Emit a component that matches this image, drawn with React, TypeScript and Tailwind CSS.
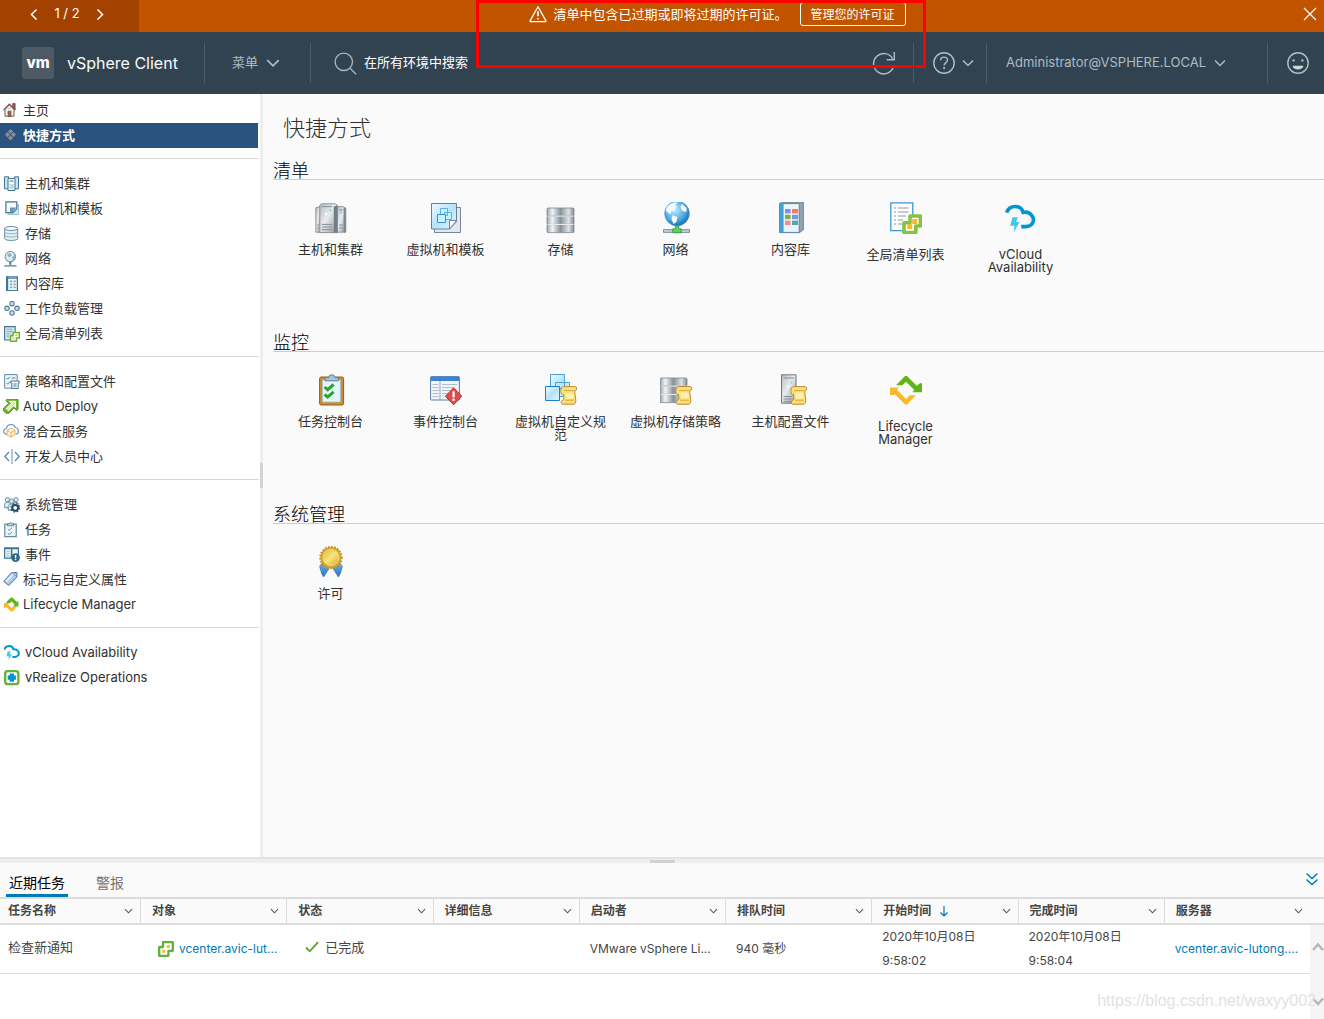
import React from "react";

type IconProps = { className?: string };

/* ---------- header glyphs ---------- */

function Chevron({ className, d = "M1 4.5 6 9.5l5-5" }: IconProps & { d?: string }) {
  return (
    <svg className={className} viewBox="0 0 12 14" fill="none" stroke="currentColor" strokeWidth="1.5" aria-hidden="true">
      <path d={d} />
    </svg>
  );
}

function WarningIcon() {
  return (
    <svg className="h-[18px] w-[18px] shrink-0" viewBox="0 0 18 18" fill="none" stroke="currentColor" strokeWidth="1.3" aria-hidden="true">
      <path d="M9 1.8 1.2 15.6c-.3.6 0 1 .6 1h14.4c.6 0 .9-.4.6-1z" strokeLinejoin="round" />
      <path d="M9 6.3v5" strokeWidth="1.6" />
      <circle cx="9" cy="13.7" r=".9" fill="currentColor" stroke="none" />
    </svg>
  );
}

function SearchIcon() {
  return (
    <svg className="h-6 w-6" viewBox="0 0 24 24" fill="none" stroke="#a9b5bd" strokeWidth="1.4" aria-hidden="true">
      <circle cx="9.8" cy="10.8" r="8.7" />
      <path d="m16.1 17.2 6 6" />
    </svg>
  );
}

function RefreshIcon() {
  return (
    <svg className="h-6 w-6" viewBox="0 0 24 24" fill="none" stroke="#b3bdc4" strokeWidth="1.4" aria-hidden="true">
      <path d="M21.3 16.3A10.2 10.2 0 1 1 20.6 7.6" />
      <path d="M22.3 1v7.7h-7.6" />
    </svg>
  );
}

function HelpIcon() {
  return (
    <svg className="h-6 w-6" viewBox="0 0 24 24" fill="none" stroke="#b3bdc4" strokeWidth="1.4" aria-hidden="true">
      <circle cx="12" cy="12" r="10.2" />
      <path d="M8.6 9.3c0-4.2 6.9-4.2 6.9-.3 0 2.6-3.4 2.6-3.4 5.4" />
      <circle cx="12.1" cy="17.1" r="1.1" fill="#b3bdc4" stroke="none" />
    </svg>
  );
}

function SmileIcon() {
  return (
    <svg className="h-6 w-6" viewBox="0 0 24 24" fill="none" stroke="#b3bdc4" strokeWidth="1.4" aria-hidden="true">
      <circle cx="12" cy="12" r="10.2" />
      <circle cx="7.6" cy="9.4" r="1.2" fill="#b3bdc4" stroke="none" />
      <circle cx="16.4" cy="9.4" r="1.2" fill="#b3bdc4" stroke="none" />
      <path d="M6.6 14.8h10.8c-.4 5-10.4 5-10.8 0z" fill="#cfd6da" stroke="none" />
    </svg>
  );
}

/* ---------- 16px navigator icons ---------- */

function Small({ children }: { children: React.ReactNode }) {
  return (
    <svg className="h-4 w-4 shrink-0" viewBox="0 0 16 16" fill="none" aria-hidden="true">
      {children}
    </svg>
  );
}

const HomeIcon = () => (
  <Small>
    <path d="M9.6.4h2.6v6H9.6z" fill="#a85048" stroke="#7a3a34" strokeWidth=".6" />
    <path d="M2 6.4 6.300 1.800l4.700 4.600v6.800H2z" fill="#f3f0ec" stroke="#6e5a52" strokeWidth="1" />
    <path d="M.4 7.200 6.300 1l6.200 6.200" stroke="#6e5a52" strokeWidth="1.1" />
    <path d="M5 8.200h3v5H5z" fill="#b0655c" stroke="#6b3832" strokeWidth=".6" />
    <path d="M5.200 4.500h2.400v2H5.200z" fill="#c9d3da" />
  </Small>
);
const ShortcutsIcon = () => (
  <Small>
    <g fill="#8c8c8c">
      <path d="M7.5.9 10.100 3.500 7.500 6.100 4.900 3.500z" />
      <path d="M4.500 4.100 7.100 6.700 4.500 9.300 1.900 6.700z" />
      <path d="M10.500 4.100 13.100 6.700 10.500 9.300 7.900 6.700z" />
      <path d="M7.500 7.300 10.100 9.900 7.500 12.500 4.900 9.900z" />
    </g>
  </Small>
);
const HostsIcon = () => (
  <Small>
    <g stroke="#3f7792">
      <path d="M.5.8h4v12H.5zM10.5.8h4v12h-4z" fill="#cfe0e8" />
      <path d="M4 2.500h7v12H4z" fill="#f6fafc" />
      <path d="M5.500 5h4" />
    </g>
    <path d="M5.500 8h4.400v5.400H5.500z" fill="#c5d9e3" />
  </Small>
);
const VmsIcon = () => (
  <Small>
    <path d="M4 3.500h10.500v10H4z" fill="#d9e7ee" stroke="#9dbfce" />
    <path d="M1.900.8h10.900v7L9 11.600H1.900z" fill="#f4f9fb" stroke="#3f7792" strokeWidth="1.2" />
    <path d="M6 11.500V6.400h6.500L8.200 11.600z" fill="#3f7792" opacity=".75" />
  </Small>
);
const StorageIcon = () => (
  <Small>
    <path d="M.7 2.500v10c0 2.600 13 2.600 13 0v-10" fill="#e7f0f4" stroke="#5f8da3" />
    <ellipse cx="7.200" cy="2.500" rx="6.500" ry="2" fill="#f8fbfc" stroke="#5f8da3" />
    <path d="M.7 6c0 2.400 13 2.400 13 0M.7 9.200c0 2.400 13 2.400 13 0" stroke="#8fb0c0" />
  </Small>
);
const NetworkIcon = () => (
  <Small>
    <circle cx="6.300" cy="5.700" r="5.200" fill="#dfeaf0" stroke="#5f8da3" />
    <path d="M3 3.600 6 2l2 2.500-3 2zM8.200 6l2.300-1.600.3 2.700-2 1.800z" fill="#8eb1c2" />
    <path d="M2 8.500c3.500 4.500 10 1 8.300-5.500" stroke="#7da2b4" strokeWidth=".7" />
    <path d="M6.300 10.800v3" stroke="#3f7792" strokeWidth="2" />
    <path d="M.3 14.900h12.200" stroke="#3f7792" strokeWidth="1.2" />
  </Small>
);
const LibraryIcon = () => (
  <Small>
    <path d="M2.600.9h10.800v13.600H2.600z" fill="#f3f8fa" stroke="#3f7792" strokeWidth="1.200" />
    <path d="M2 .5h2.200v14.400H2z" fill="#3f7792" />
    <path d="M3 2.200h10.400" stroke="#3f7792" />
    <g fill="#7fa6b8">
      <path d="M6 4.500h2.200v1.800H6zM9.500 4.500h2.200v1.800H9.500zM6 7.500h2.200v1.800H6zM9.500 7.500h2.200v1.800H9.500zM6 10.500h2.200v1.800H6zM9.500 10.500h2.200v1.800H9.500z" />
    </g>
  </Small>
);
const WorkloadIcon = () => (
  <Small>
    <g fill="#cfe0e8" stroke="#4d7f97" strokeWidth="1.100">
      <circle cx="8" cy="2.700" r="2.200" />
      <circle cx="8" cy="11.900" r="2.200" />
      <circle cx="3" cy="7.300" r="2.200" />
      <circle cx="13" cy="7.300" r="2.200" />
    </g>
  </Small>
);

function VcGlyph() {
  return (
    <>
      <path d="M5 1.200h9.800v8.600h-4.400v5H1.200V6H5z" fill="#fff" stroke="#62b234" strokeWidth="2.300" strokeLinejoin="round" />
      <path d="M8.800 4h3v3h-3zM4.200 8.800h3v3h-3z" fill="#f9b934" />
    </>
  );
}

const GlobalListIcon = () => (
  <Small>
    <path d="M.600.600h10.600v13.400H.600z" fill="#d5e5ec" stroke="#3f7792" strokeWidth="1.100" />
    <path d="M2.500 3.300h6M2.500 5.600h6M2.500 7.900h4M2.500 10.200h3" stroke="#8aa9b8" />
    <g transform="translate(5.800 5.800) scale(.64)">
      <VcGlyph />
    </g>
  </Small>
);
const PolicyIcon = () => (
  <Small>
    <path d="M.600.600h12.600v13.600H.600z" fill="#eef5f8" stroke="#5f8da3" />
    <path d="m2.500 4 1.200 1.200L5.800 2.800M2.500 9l1.200 1.200 2.100-2.400M7.500 4h4" stroke="#4d7f97" />
    <path d="M6.800 7h8.400v2h-1v5.400H7.800V9h-1z" fill="#fff" stroke="#3f7792" />
    <path d="M9.400 10h3.200M9.400 12h3.200" stroke="#3f7792" />
  </Small>
);
const AutoDeployIcon = () => (
  <Small>
    <path d="M4.200 0h10c.5 0 .8.300.8.800v9.600l-1.200 1.100-3-2.600-4.600 5.300H3L.600 12V9.200L5.700 4.400 3 1.600z" fill="#74b52b" stroke="#4f9416" strokeWidth="1" strokeLinejoin="round" />
    <path d="M6.200 2.300h6.300v6.200l-2-1.900-5 5.200-2.300-2.200L8.300 4.400z" fill="#d8efb0" stroke="#fff" strokeWidth=".9" />
  </Small>
);
const HybridCloudIcon = () => (
  <Small>
    <path d="M4 10.400C-.400 10-.200 4.600 3.400 4.500c.5-4.800 7.600-5.400 8.800-1 4.200.4 4.200 6.400.4 6.900" stroke="#6d9dbb" strokeWidth="1.200" />
    <path d="m8 4.300 4 2v4.600l-4 2.200-4-2.200V6.300zM4 6.300l4 2.200 4-2.200M8 8.500v4.600" fill="#fdf3df" stroke="#e8b455" strokeWidth="1" />
  </Small>
);
const DeveloperIcon = () => (
  <Small>
    <path d="M5 3 .800 7.500 5 12M11 3l4.200 4.500L11 12" stroke="#4d86a5" strokeWidth="1.200" />
    <path d="M8 0v15" stroke="#7fa6b8" strokeWidth="1.200" />
  </Small>
);
const AdminIcon = () => (
  <Small>
    <g fill="#e3edf2" stroke="#5f8da3" strokeWidth="1">
      <circle cx="3.400" cy="2.700" r="2.100" />
      <circle cx="12" cy="2.700" r="2.100" />
      <path d="M.600 10.800V7.400c0-2.800 5.400-2.800 5.400 0v3.400zM9.400 8.800V7.400c0-2.800 5.200-2.800 5.200 0v1.400z" />
      <circle cx="7.700" cy="4.100" r="2.100" />
      <path d="M4.200 13.200V9.600c0-3.400 7-3.400 7 0v3.600z" />
    </g>
    <circle cx="11.200" cy="10.800" r="2.900" fill="#fff" stroke="#234d63" strokeWidth="2" />
    <circle cx="11.200" cy="10.800" r="4.300" stroke="#234d63" strokeWidth="1.200" strokeDasharray="1.700 1.700" />
  </Small>
);
const TasksIcon = () => (
  <Small>
    <path d="M.800 2.200h11.400v12.400H.800z" fill="#f1f7f9" stroke="#5f8da3" strokeWidth="1.200" />
    <path d="M3.500 1.800h1.800L6.500.300l1.200 1.500h1.800v2h-6z" fill="#c5d9e3" stroke="#3f7792" strokeWidth=".8" />
    <path d="m3.800 7.200 1.300 1.200 3-2.800M3.800 11.400l1.300 1.200 3-2.800" stroke="#5f8da3" />
  </Small>
);
const EventsIcon = () => (
  <Small>
    <path d="M.600 1.200h13.800v10H.600z" fill="#eef5f8" stroke="#3f7792" strokeWidth="1.200" />
    <path d="M0 1.400h15M7.600 1.200v10" stroke="#3f7792" strokeWidth="1.600" />
    <path d="M2.300 4.600h3.400M2.300 6.800h3.400M2.300 9h3.400" stroke="#9dbfce" />
    <circle cx="11.600" cy="10.600" r="4.300" fill="#2f6785" />
    <path d="M11.600 8v3M11.600 11.800v1.400" stroke="#fff" strokeWidth="1.400" />
  </Small>
);
const TagIcon = () => (
  <Small>
    <path d="M8.300.8 13.800.500l.200 4.600-8.200 8.400L.700 9.400z" fill="#a9cbe8" stroke="#4b79a8" strokeLinejoin="round" />
    <path d="m8.500 2.500 3-.2-7.400 8-1.700-1.200z" fill="#deedf9" />
    <circle cx="12" cy="2.600" r="1.100" fill="#fff" stroke="#4b79a8" strokeWidth=".6" />
  </Small>
);

function LifecycleGlyph() {
  return (
    <>
      <path d="M6 11.300 14.600 2.400c.9-.9 1.900-.9 2.800 0l9.400 9.300L30 9.200h2v9h-9.600l1.900-2.200-8.300-8.200-3.700 3.500z" fill="#60b515" />
      <path d="M26 21.200 17.400 30c-.9.9-1.900.9-2.800 0l-9.500-9.500L0 21.600V13.400h9L7 15.800l9 9.100 3.800-3.700z" fill="#fdb827" />
    </>
  );
}
const LifecycleSmall = () => (
  <Small>
    <path d="M3.400 5 7.300 1c.8-.8 1.800-.8 2.600 0l3.900 3.900L15.400 4v5.400H10l1.600-1.900-3-3L7 6H4z" fill="#60b515" />
    <path d="M13.300 10.200 9.900 13.900c-.8.8-1.800.8-2.600 0L3.400 10 1 11.200V5.900h5.600L5.100 7.500l3.500 3.400 1.300-1.300h2.700z" fill="#fdb827" />
  </Small>
);
function VCloudGlyph() {
  return (
    <>
      <path d="M2.600 9.600C5.500 1.400 17 1.500 19.200 9.400c7.200-1.600 12.500 5.600 9.200 11-1.500 2.400-3.800 3.200-6.600 3.200h-4.600" stroke="#0095d3" strokeWidth="3.600" />
      <path d="M8.400 14.200h5.400l-1.700 4.800h3.400L9.700 29.600l.8-6.800H6.200z" fill="#3ccbe8" />
    </>
  );
}
const VCloudSmall = () => (
  <Small>
    <path d="M.3 4.700c1.500-4.800 8.200-5 9.200-.4 3.800-.5 6.700 3.200 4.700 6-.8 1.200-2 1.700-3.500 1.700H8.400" stroke="#0095d3" strokeWidth="2" />
    <path d="M3.600 6.500h3l-1 2.800H8L4.500 15l.4-3.800H2.500z" fill="#3ccbe8" />
  </Small>
);
const VRealizeIcon = () => (
  <Small>
    <rect x="1.200" y="1" width="13.200" height="13.200" rx="2.800" fill="#fff" stroke="#62b234" strokeWidth="2.300" />
    <path d="M5.600 3.500h4.400v1.900h1.900v4.400H10v1.900H5.600V9.800H3.700V5.400h1.900z" fill="#0095d3" />
  </Small>
);

/* ---------- 32px shortcut icons ---------- */

function SharedGradients() {
  return (
    <svg className="absolute h-0 w-0" aria-hidden="true">
      <defs>
        <linearGradient id="metal" x1="0" x2="1">
          <stop offset="0" stopColor="#9aa4ab" />
          <stop offset=".2" stopColor="#f2f4f5" />
          <stop offset=".5" stopColor="#86929a" />
          <stop offset=".8" stopColor="#dfe3e5" />
          <stop offset="1" stopColor="#7f8b93" />
        </linearGradient>
        <linearGradient id="tower" x1="0" x2="1" y1="0" y2="1">
          <stop offset="0" stopColor="#b4babe" />
          <stop offset=".45" stopColor="#e9ebec" />
          <stop offset="1" stopColor="#8e979d" />
        </linearGradient>
        <linearGradient id="sky" x1="0" x2="1" y1="0" y2="1">
          <stop offset="0" stopColor="#eefaff" />
          <stop offset=".5" stopColor="#b4e2f7" />
          <stop offset="1" stopColor="#e6f7fe" />
        </linearGradient>
        <radialGradient id="globe" cx=".4" cy=".35" r=".65">
          <stop offset="0" stopColor="#c8edff" />
          <stop offset=".6" stopColor="#55b2e8" />
          <stop offset="1" stopColor="#1d74b6" />
        </radialGradient>
        <linearGradient id="gold" x1="0" x2="1" y1="0" y2="1">
          <stop offset="0" stopColor="#dcb53a" />
          <stop offset=".5" stopColor="#f6e67c" />
          <stop offset="1" stopColor="#d6a82c" />
        </linearGradient>
        <linearGradient id="ribbon" x1="0" x2="0" y1="0" y2="1">
          <stop offset="0" stopColor="#6fb2ea" />
          <stop offset="1" stopColor="#2b6fb8" />
        </linearGradient>
      </defs>
    </svg>
  );
}

function Large({ children }: { children: React.ReactNode }) {
  return (
    <svg className="h-8 w-8" viewBox="0 0 32 32" fill="none" aria-hidden="true">
      {children}
    </svg>
  );
}

function Scroll() {
  return (
    <>
      <path d="M18.600 12.600h11.600c2.200 0 2 3.800-.2 4-.8 2 .8 7.200.8 10 0 2.600-1 3.600-2.600 3.600H18c-2.400 0-2.600-3.800 0-4 1.200-.4.8-3.400.4-5.800h-1c-2.600-.8-2-7.600 1.200-7.800z" fill="#fbdf7c" stroke="#b98a22" />
      <path d="M19 16.600h10M20 26.200h9" stroke="#dba93a" />
      <path d="M20.600 18.600h7.800l.6 6h-8z" fill="#fdefae" />
    </>
  );
}

function Disks() {
  return (
    <>
      <rect x="2" y="6" width="27" height="8" rx="1" fill="url(#metal)" stroke="#7d8990" strokeWidth=".8" />
      <rect x="2" y="14.300" width="27" height="8" rx="1" fill="url(#metal)" stroke="#7d8990" strokeWidth=".8" />
      <rect x="2" y="22.600" width="27" height="8" rx="1" fill="url(#metal)" stroke="#7d8990" strokeWidth=".8" />
      <path d="M3 14.100h25M3 22.400h25" stroke="#f4f6f7" />
    </>
  );
}

const HostsLarge = () => (
  <Large>
    <path d="M.800 5.800 6 4.600v25.600H.800z" fill="url(#tower)" stroke="#7b858c" strokeWidth=".8" />
    <path d="M22 4.600h6l2.800 1.400v24.200H22z" fill="url(#tower)" stroke="#7b858c" strokeWidth=".8" />
    <path d="m28.600 5.400 2.200.6v24.200h-2.200z" fill="#7d878d" />
    <path d="M4.800 3.200 7 1.800h13.400l1.800 1.400v27.400H4.800z" fill="url(#tower)" stroke="#737e85" strokeWidth=".8" />
    <path d="m18.800 4.400 3.400-1v27.200h-3.400z" fill="#727d84" />
    <path d="M6.600 4.600h10.600M6.600 22.400h10.600M6.600 25h10.600M6.600 27.600h10.600M24 8h4M24 23h4M24 26h4M1.800 23h2M1.800 26h2" stroke="#89939a" />
    <circle cx="15.500" cy="8.200" r="1" fill="#66d5f5" />
    <circle cx="26" cy="10.400" r="1" fill="#66d5f5" />
    <circle cx="11" cy="12" r="1.400" fill="#f4f5f6" />
  </Large>
);
const VmsLarge = () => (
  <Large>
    <path d="M4.500 5.500h26v25h-26z" fill="#e3e8ee" stroke="#74869c" />
    <path d="M1.500 1.500h25v18.200l-7 7.300h-18z" fill="url(#sky)" stroke="#66809c" />
    <path d="M26.500 18.500h-7V27z" fill="#fff" stroke="#74869c" />
    <g fill="#c5f2ff" stroke="#5ab0e4">
      <path d="M10.500 6.500h7v7h-7zM14.500 10.500h7v7h-7z" />
      <path d="M7.500 12.500h8v8h-8z" stroke="#3c8fcc" />
    </g>
  </Large>
);
const StorageLarge = () => (
  <Large>
    <Disks />
  </Large>
);
const NetworkLarge = () => (
  <Large>
    <circle cx="17" cy="11.500" r="12.300" fill="url(#globe)" stroke="#3a8cc4" strokeWidth=".7" />
    <path d="M7 4.700c3-3.600 8-5 10.200-3.800l-2.400 2.400 2.400 1-3.400 4.600-2.400.4-1.200 3-4.600-3.600zM22 2.100l4.800 4-.6 4.200-4-1.600-1.800-3.600zM12.600 13.300l4.800 1.800-1 5-2.800 1.800-2.200-4.800z" fill="#f1fbff" />
    <path d="M3.500 27.600h26v2.800h-26z" fill="#c3ced5" stroke="#6c7d88" strokeWidth=".8" />
    <path d="M15.400 24h3.400v2.800h2.400v4h-8.400v-4h2.600z" fill="#5bd15e" stroke="#2c9540" strokeWidth=".8" />
  </Large>
);
const LibraryLarge = () => (
  <Large>
    <path d="m4.600 1.400 3-1.200h20.800v27.600l-4 2.800H4.600z" fill="#92a2ae" stroke="#5f7380" strokeWidth=".8" />
    <path d="M4.600 1.600h19.600v28.800H4.600z" fill="#eef4f8" stroke="#5c86a5" />
    <path d="M4.600 1.600h4v28.800h-4z" fill="#45a0db" />
    <path d="M10 7h5.600v4.400H10z" fill="#8290e2" />
    <path d="M17 7h6v4.400h-6z" fill="#f57a5e" />
    <path d="M10 12.800h5.600v4.400H10z" fill="#78ae58" />
    <path d="M17 12.800h6v4.400h-6z" fill="#6f98df" />
    <path d="M10 18.600h5.600V23H10z" fill="#ee8d97" />
    <path d="M17 18.600h6V23h-6z" fill="#53aaa2" />
  </Large>
);
const GlobalListLarge = () => (
  <Large>
    <path d="M.800.800h22v27.800h-22z" fill="#fafcfd" stroke="#3d97d3" strokeWidth="1.300" />
    <path d="M4 6h2M8 6h10.500M4 10h2M8 10h10.500M4 14h2M8 14h8M4 18h2M8 18h5M4 22h2M8 22h4" stroke="#b5bcc0" strokeWidth="1.700" />
    <path d="M20 14h10.400v10h-4.600v6.600H14v-9.800h6z" fill="#fff" stroke="#86c440" strokeWidth="3.600" strokeLinejoin="round" />
    <path d="M22.200 17h5v5h-5zM17.200 22h5v5h-5z" fill="#fbb92f" />
  </Large>
);
const VCloudLarge = () => (
  <Large>
    <g transform="translate(-1 1)">
      <VCloudGlyph />
    </g>
  </Large>
);
const TaskConsoleLarge = () => (
  <Large>
    <rect x="4.600" y="3" width="24" height="28" rx="1.600" fill="#c98f2e" stroke="#8f6118" />
    <path d="M7.500 6h18v22h-18z" fill="#e4f4fe" stroke="#a9bccb" strokeWidth=".8" />
    <path d="M10 3.600h3.600L15 1h3.600L20 3.600h3.400v3.200H10z" fill="#a9c3d8" stroke="#5d7f99" />
    <path d="m9.600 13 3 2.700 6-5.200M9.600 20.400l3 2.700 6-5.200" stroke="#2fa42d" strokeWidth="3" />
  </Large>
);
const EventConsoleLarge = () => (
  <Large>
    <rect x=".600" y="2.600" width="28.800" height="23.400" rx="1" fill="#eff5fa" stroke="#5b7ea3" />
    <path d="M.600 2.600h28.800v4.400H.600z" fill="#3c84d0" />
    <path d="M10 7v19" stroke="#8ba7c1" />
    <path d="M2.500 10.500h6M2.500 13.500h6M2.500 16.500h6M2.500 19.500h6M2.500 22.500h6M12 10.500h15M12 13.500h12M12 16.500h8M12 19.500h6" stroke="#b1bdc7" />
    <path d="m23.600 13.800 8.200 8.500-8.200 8.500-8.200-8.500z" fill="#e04a4a" stroke="#b52d2f" strokeLinejoin="round" />
    <path d="M23.600 17.200v6M23.600 24.600v2.400" stroke="#fff" strokeWidth="2.200" />
  </Large>
);
const CustomSpecLarge = () => (
  <Large>
    <g fill="url(#sky)" stroke="#4ba0dc">
      <path d="M5.500.500h14v14h-14zM10.500 8.500h14v14h-14z" />
      <path d="M.500 12.500h14v14H.500z" stroke="#1f7fc4" />
    </g>
    <Scroll />
  </Large>
);
const StoragePolicyLarge = () => (
  <Large>
    <g transform="translate(-2 -2)">
      <Disks />
    </g>
    <Scroll />
  </Large>
);
const HostProfileLarge = () => (
  <Large>
    <path d="M6.500.800h14.500v28.400H6.500z" fill="url(#tower)" stroke="#6d777e" />
    <path d="M8.500 4h10.500M8.500 22.500h8M8.500 25h8M8.500 27.400h8" stroke="#858f95" />
    <circle cx="16.400" cy="8.600" r="1" fill="#66d5f5" />
    <circle cx="13" cy="12.600" r="1.400" fill="#f4f5f6" />
    <Scroll />
  </Large>
);
const LifecycleLarge = () => (
  <Large>
    <LifecycleGlyph />
  </Large>
);
const LicenseLarge = () => (
  <Large>
    <path d="m7 17 8 4-6.400 10-2-3.600-2-7z" fill="url(#ribbon)" stroke="#2d68a6" strokeWidth=".6" />
    <path d="m25 17-8 4 6.400 10 2-3.600 2-7z" fill="url(#ribbon)" stroke="#2d68a6" strokeWidth=".6" />
    <circle cx="16" cy="11.500" r="10.600" fill="#d9aa2a" stroke="#c6962a" strokeWidth="2.200" strokeDasharray="1.700 1.400" />
    <circle cx="16" cy="11.500" r="8" fill="url(#gold)" stroke="#f3e08a" strokeWidth=".8" />
  </Large>
);

/* ---------- data ---------- */

type NavItem = { label: string; icon: React.FC; tight?: boolean; active?: boolean };

const navGroups: NavItem[][] = [
  [
    { label: "主页", icon: HomeIcon, tight: true },
    { label: "快捷方式", icon: ShortcutsIcon, tight: true, active: true },
  ],
  [
    { label: "主机和集群", icon: HostsIcon },
    { label: "虚拟机和模板", icon: VmsIcon },
    { label: "存储", icon: StorageIcon },
    { label: "网络", icon: NetworkIcon },
    { label: "内容库", icon: LibraryIcon },
    { label: "工作负载管理", icon: WorkloadIcon },
    { label: "全局清单列表", icon: GlobalListIcon },
  ],
  [
    { label: "策略和配置文件", icon: PolicyIcon },
    { label: "Auto Deploy", icon: AutoDeployIcon, tight: true },
    { label: "混合云服务", icon: HybridCloudIcon, tight: true },
    { label: "开发人员中心", icon: DeveloperIcon },
  ],
  [
    { label: "系统管理", icon: AdminIcon },
    { label: "任务", icon: TasksIcon },
    { label: "事件", icon: EventsIcon },
    { label: "标记与自定义属性", icon: TagIcon, tight: true },
    { label: "Lifecycle Manager", icon: LifecycleSmall, tight: true },
  ],
  [
    { label: "vCloud Availability", icon: VCloudSmall },
    { label: "vRealize Operations", icon: VRealizeIcon },
  ],
];

type Tile = { label: string; icon: React.FC; tall?: boolean };

const sections: { title: string; tiles: Tile[] }[] = [
  {
    title: "清单",
    tiles: [
      { label: "主机和集群", icon: HostsLarge },
      { label: "虚拟机和模板", icon: VmsLarge },
      { label: "存储", icon: StorageLarge },
      { label: "网络", icon: NetworkLarge },
      { label: "内容库", icon: LibraryLarge },
      { label: "全局清单列表", icon: GlobalListLarge, tall: true },
      { label: "vCloud Availability", icon: VCloudLarge, tall: true },
    ],
  },
  {
    title: "监控",
    tiles: [
      { label: "任务控制台", icon: TaskConsoleLarge },
      { label: "事件控制台", icon: EventConsoleLarge },
      { label: "虚拟机自定义规范", icon: CustomSpecLarge },
      { label: "虚拟机存储策略", icon: StoragePolicyLarge },
      { label: "主机配置文件", icon: HostProfileLarge },
      { label: "Lifecycle Manager", icon: LifecycleLarge, tall: true },
    ],
  },
  { title: "系统管理", tiles: [{ label: "许可", icon: LicenseLarge }] },
];

const columns = ["任务名称", "对象", "状态", "详细信息", "启动者", "排队时间", "开始时间", "完成时间", "服务器"];

/* ---------- page parts ---------- */

function Banner() {
  return (
    <div className="flex h-8 bg-[#c25400] text-[13px] text-white">
      <div className="flex w-[139px] items-center gap-3 bg-[#a34200] pb-1 pl-7">
        <button aria-label="上一条" className="flex h-5 w-3 items-center">
          <Chevron className="h-[14px] w-3" d="M8.500 2.500 3.500 7.500l5 5" />
        </button>
        <span className="w-[30px] text-center">1 / 2</span>
        <button aria-label="下一条" className="flex h-5 w-3 items-center">
          <Chevron className="h-[14px] w-3" d="M3.500 2.500l5 5-5 5" />
        </button>
      </div>
      <div className="flex flex-1 items-center justify-center pb-1">
        <WarningIcon />
        <span className="ml-1.5 mr-3 whitespace-nowrap pt-px">清单中包含已过期或即将过期的许可证。</span>
        <button className="h-6 rounded-[3px] border border-white px-[10px] pt-px text-xs leading-none">管理您的许可证</button>
      </div>
      <button aria-label="关闭" className="flex w-7 items-center justify-center pb-1">
        <svg className="h-[14px] w-[14px]" viewBox="0 0 14 14" stroke="currentColor" strokeWidth="1.200" aria-hidden="true">
          <path d="m1 1 12 12M13 1 1 13" />
        </svg>
      </button>
    </div>
  );
}

function Divider() {
  return <div className="h-10 w-px bg-[#4d5c69]" />;
}

function Header() {
  return (
    <header className="flex h-[62px] items-center bg-[#314351] text-[13px] text-[#adbbc4]">
      <div className="flex w-[204px] items-center gap-[13px] pl-[22px]">
        <div className="flex h-8 w-8 items-center justify-center rounded-[3px] bg-[#4d5a66] text-[15px] font-extrabold text-white">vm</div>
        <span className="whitespace-nowrap text-base text-[#fafafa]">vSphere Client</span>
      </div>
      <Divider />
      <button className="flex w-[105px] items-center justify-center gap-2 pr-[3px]">
        菜单
        <Chevron className="h-4 w-[14px]" />
      </button>
      <Divider />
      <label className="flex flex-1 items-center gap-1.5 pl-[23px]">
        <SearchIcon />
        <input aria-label="搜索" placeholder="在所有环境中搜索" className="w-40 bg-transparent text-[13px] text-white outline-none placeholder:text-white" />
      </label>
      <button aria-label="刷新" className="mr-[17px]">
        <RefreshIcon />
      </button>
      <Divider />
      <button aria-label="帮助" className="flex w-[72px] items-center justify-center gap-1.5 pl-1.5">
        <HelpIcon />
        <Chevron className="h-[14px] w-3" />
      </button>
      <Divider />
      <button className="flex w-[280px] items-center gap-2 pl-[19px]">
        Administrator@VSPHERE.LOCAL
        <Chevron className="h-[14px] w-3" />
      </button>
      <Divider />
      <button aria-label="反馈" className="flex w-14 justify-center pl-1">
        <SmileIcon />
      </button>
    </header>
  );
}

function Navigator() {
  return (
    <nav className="w-[260px] shrink-0 bg-white pr-px pt-1 text-[13px] text-[#313131]">
      {navGroups.map((group, g) => (
        <ul key={g} className={g ? "mt-[10px] border-t border-[#d8d8d8] pt-3" : ""}>
          {group.map(({ label, icon: Icon, tight, active }) => (
            <li key={label} className={active ? "mr-px bg-[#29527f] font-bold text-white" : ""}>
              <a href="#" className={tight ? "flex h-[25px] items-center gap-1 pl-[3px]" : "flex h-[25px] items-center gap-[5px] pl-1"}>
                <Icon />
                <span>{label}</span>
              </a>
            </li>
          ))}
        </ul>
      ))}
    </nav>
  );
}

function Shortcuts() {
  return (
    <main className="min-w-0 flex-1 bg-[#fafafa] pl-[10px] text-[#313131]">
      <h1 className="px-[10px] pb-[14px] pt-[18px] text-[22px] font-light leading-8">快捷方式</h1>
      {sections.map(({ title, tiles }) => (
        <section key={title} className="h-[172px]">
          <h2 className="h-[22px] border-b border-[#c5d0d6] text-lg font-light leading-[26px] text-black">{title}</h2>
          <div className="flex pt-[22px]">
            {tiles.map(({ label, icon: Icon, tall }) => (
              <a key={label} href="#" className={tall ? "flex w-[115px] flex-col items-center gap-[14px]" : "flex w-[115px] flex-col items-center gap-[9px]"}>
                <Icon />
                <span className="w-24 text-center text-[13px] leading-[13px]">{label}</span>
              </a>
            ))}
          </div>
        </section>
      ))}
    </main>
  );
}

function TaskTable() {
  const line = "border-b border-[#dcdcdc] p-0 pl-[11px]";
  return (
    <table className="w-full table-fixed border-separate border-spacing-0 text-[#454545]">
      <thead>
        <tr className="h-[26px] bg-[#fafafa] text-xs">
          {columns.map((name, i) => (
            <th
              key={name}
              className={
                i ? "border-b-2 border-l border-[#dcdcdc] p-0" : "w-[140px] border-b-2 border-[#dcdcdc] p-0"
              }
            >
              <span className={i ? "flex items-center pl-[11px] pr-[7px]" : "flex items-center pl-2 pr-[7px]"}>
                {name}
                {name === "开始时间" && (
                  <svg className="ml-2 h-3 w-[10px]" viewBox="0 0 10 12" fill="none" stroke="#0079b8" strokeWidth="1.200" aria-label="降序">
                    <path d="M5 1v10M1.500 7.500 5 11l3.500-3.500" />
                  </svg>
                )}
                <Chevron className="ml-auto h-[10px] w-[9px] text-[#565656]" />
              </span>
            </th>
          ))}
        </tr>
      </thead>
      <tbody>
        <tr className="h-[49px] bg-white text-xs leading-6">
          <td className="border-b border-[#dcdcdc] p-0 pb-1 pl-2 text-[13px]">检查新通知</td>
          <td className="border-b border-[#dcdcdc] p-0 pl-[18px]">
            <span className="flex items-center gap-[5px]">
              <Small>
                <VcGlyph />
              </Small>
              <a href="#" className="whitespace-nowrap text-[#0079b8]">vcenter.avic-lut...</a>
            </span>
          </td>
          <td className="border-b border-[#dcdcdc] p-0 pb-1 pl-[18px] text-[13px]">
            <span className="flex items-center gap-[5px]">
              <svg className="h-4 w-4" viewBox="0 0 16 16" fill="none" stroke="#5aa220" strokeWidth="1.800" aria-hidden="true">
                <path d="m2 8.500 3.800 3.800L14 3.200" />
              </svg>
              已完成
            </span>
          </td>
          <td className={line} />
          <td className={line}>
            <span className="whitespace-nowrap">VMware vSphere Li...</span>
          </td>
          <td className={line}>940 毫秒</td>
          <td className={line}>
            2020年10月08日
            <br />
            9:58:02
          </td>
          <td className={line}>
            2020年10月08日
            <br />
            9:58:04
          </td>
          <td className={line}>
            <a href="#" className="whitespace-nowrap text-[#0079b8]">vcenter.avic-lutong....</a>
          </td>
        </tr>
      </tbody>
    </table>
  );
}

function RecentTasks() {
  return (
    <section className="flex h-[156px] shrink-0 flex-col bg-white">
      <div role="tablist" className="flex h-9 items-end border-b-2 border-[#dcdcdc] bg-[#fafafa] text-[14px]">
        <button role="tab" aria-selected="true" className="ml-1.5 h-[31px] border-b-[3px] border-[#0079b8] px-[3px] pt-1 text-black">
          近期任务
        </button>
        <button role="tab" aria-selected="false" className="ml-[25px] h-[31px] border-b-[3px] border-transparent px-[3px] pt-1 text-[#737373]">
          警报
        </button>
        <button aria-label="折叠" className="ml-auto mr-[5px] self-center pb-0.5">
          <svg className="h-[14px] w-[14px]" viewBox="0 0 14 14" fill="none" stroke="#0079b8" strokeWidth="1.500" aria-hidden="true">
            <path d="m1.500 1.500 5.500 5 5.500-5M1.500 7.500l5.500 5 5.500-5" />
          </svg>
        </button>
      </div>
      <div className="flex flex-1">
        <div className="min-w-0 flex-1">
          <TaskTable />
        </div>
        <div className="flex w-[14px] flex-col">
          <div className="h-[26px] border-b-2 border-[#dcdcdc] bg-[#fafafa]" />
          <div className="flex flex-1 flex-col justify-between bg-[#f5f5f5] pb-3 pt-4 text-[#b5b5b5]">
            <svg className="h-3 w-[14px]" viewBox="0 0 14 12" fill="none" stroke="currentColor" strokeWidth="2.400" aria-hidden="true">
              <path d="m3 9 5-5.500 5 5.500" />
            </svg>
            <svg className="h-3 w-[14px]" viewBox="0 0 14 12" fill="none" stroke="currentColor" strokeWidth="2.400" aria-hidden="true">
              <path d="m3 3.500 5 5.500 5-5.500" />
            </svg>
          </div>
        </div>
      </div>
    </section>
  );
}

export default function App() {
  return (
    <div className="relative flex min-h-screen flex-col overflow-hidden bg-white font-['Inter','Noto_Sans_CJK_SC',sans-serif]">
      <SharedGradients />
      <Banner />
      <Header />
      <div className="flex flex-1">
        <Navigator />
        <div className="flex w-[3px] items-center bg-[#eeeeee]">
          <div className="h-[25px] w-full bg-[#d2d2d2]" />
        </div>
        <Shortcuts />
      </div>
      <div className="flex h-1.5 shrink-0 items-end justify-center border-t-2 border-[#e3e3e3] bg-[#eeeeee]">
        <div className="h-[3px] w-[25px] bg-[#d2d2d2]" />
      </div>
      <RecentTasks />
      <div className="pointer-events-none absolute left-[476px] top-0 h-[68px] w-[450px] border-[3px] border-[#ff0000]" />
      <div className="pointer-events-none absolute bottom-2 right-2 font-['Liberation_Sans',sans-serif] text-base leading-5 text-[#e2e2e2]">
        https://blog.csdn.net/waxyy002
      </div>
    </div>
  );
}
